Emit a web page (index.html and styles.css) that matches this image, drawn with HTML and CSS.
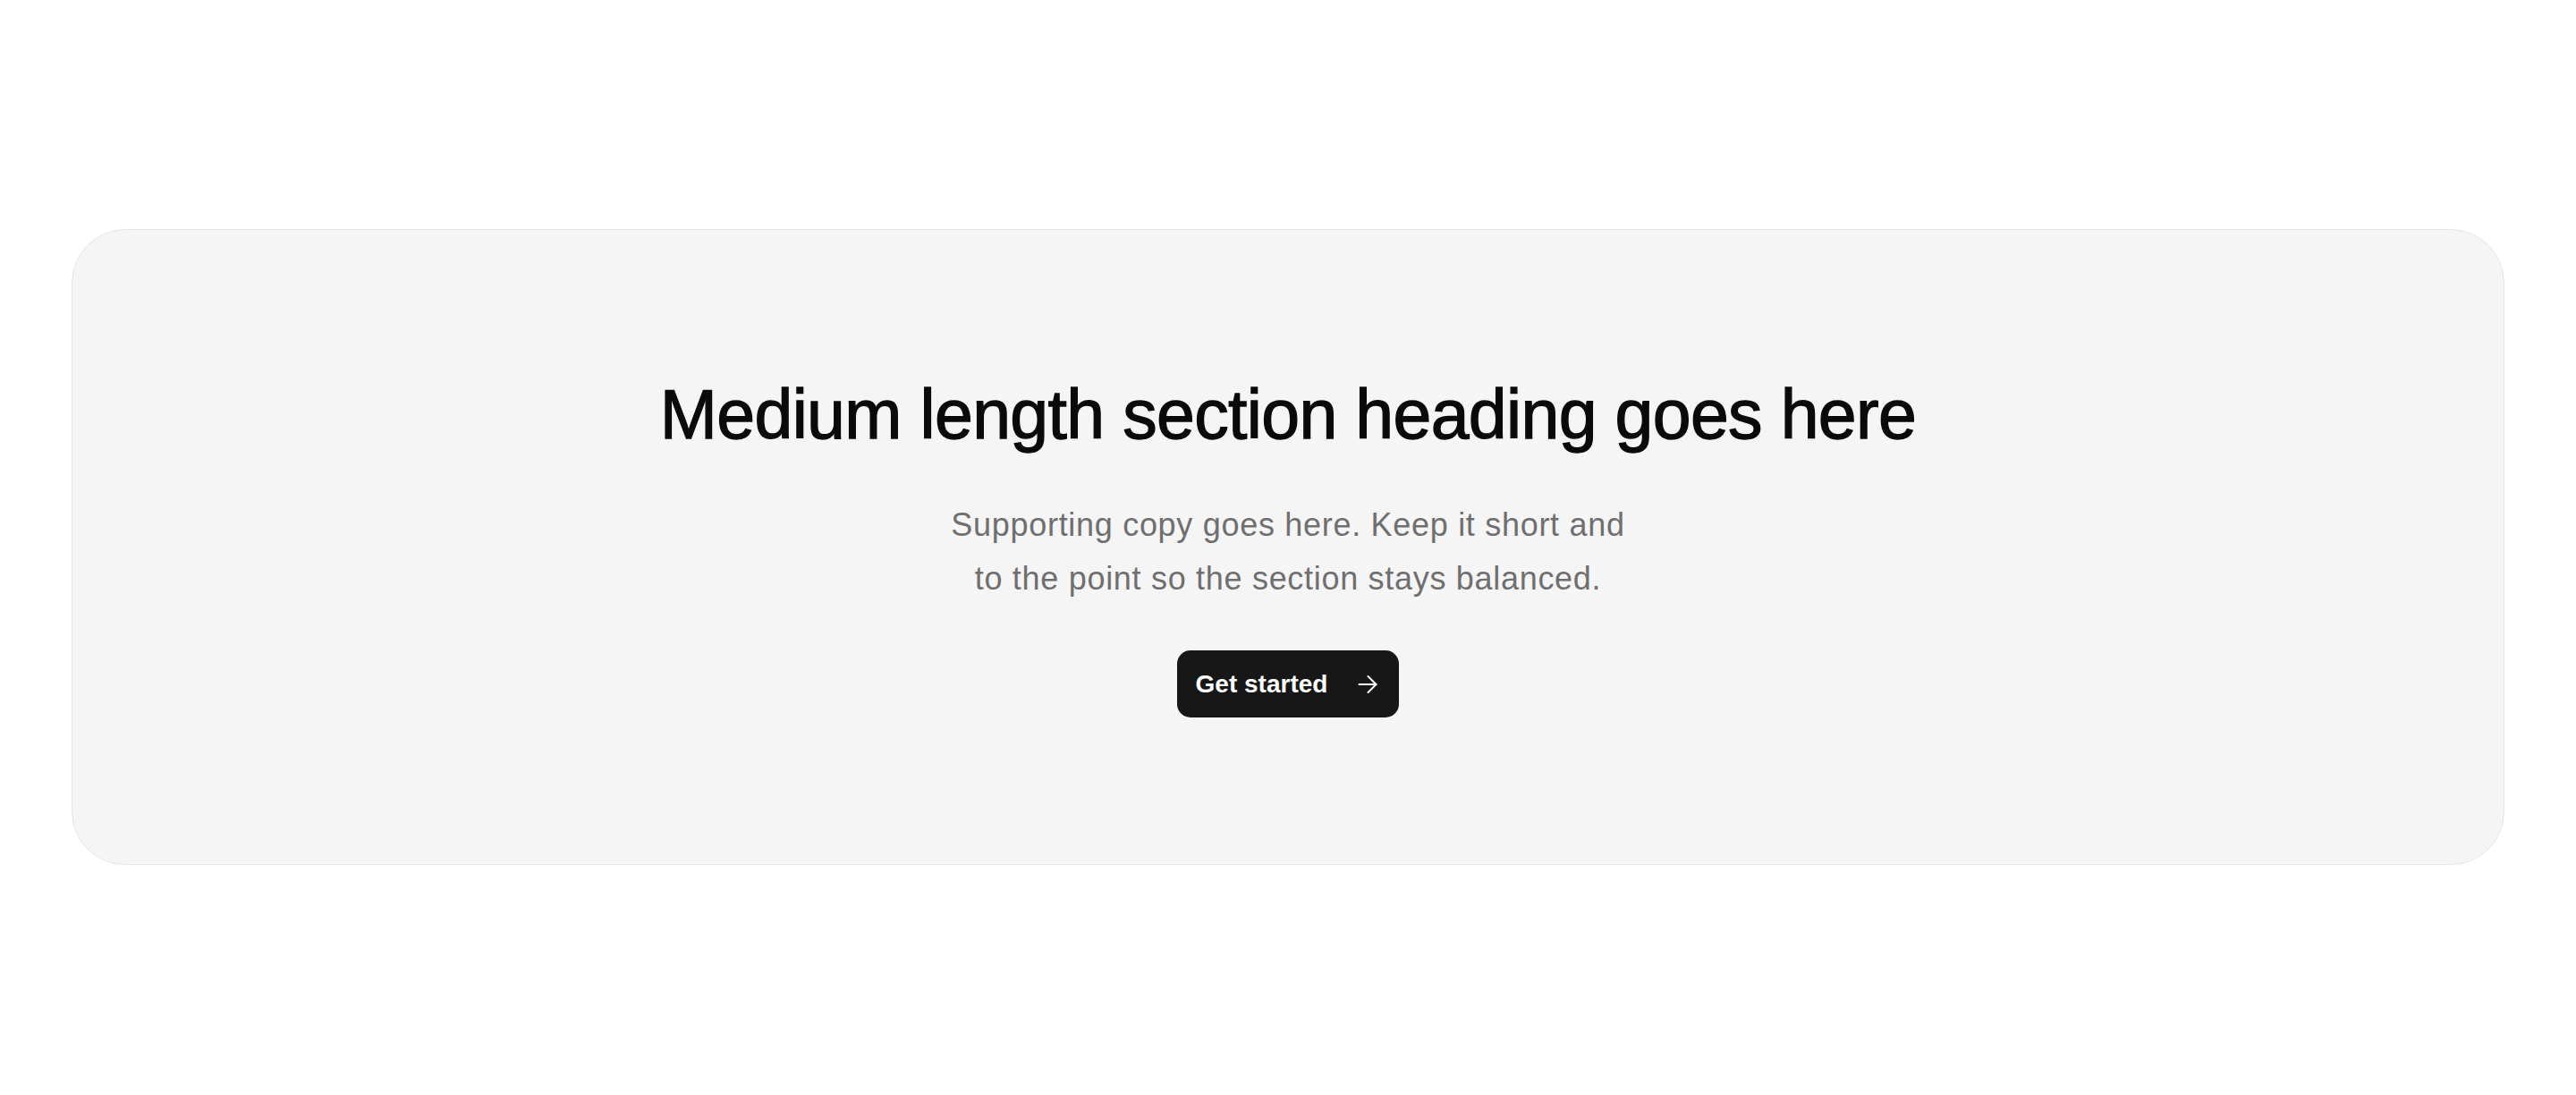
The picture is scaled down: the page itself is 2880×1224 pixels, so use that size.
FILE: index.html
```html
<!DOCTYPE html>
<html lang="en">

<head>
    <meta charset="UTF-8">
    <meta name="viewport" content="width=device-width, initial-scale=1.0">
    <title>Section</title>
    <link rel="stylesheet" href="styles.css">
</head>

<body>
    <section class="cta-section">
        <div class="cta-card">
            <h2 class="cta-title">Medium length section heading goes here</h2>
            <p class="cta-text">Supporting copy goes here. Keep it short and to the point so the section stays balanced.</p>
            <a href="#" class="cta-btn">
                <span>Get started</span>
                <svg class="cta-arrow" width="22" height="22" viewBox="0 0 22 22" fill="none" stroke="currentColor" stroke-width="2" stroke-linecap="round" stroke-linejoin="round">
                    <path d="M1.5 11h19"></path>
                    <path d="M11.5 2l9 9-9 9"></path>
                </svg>
            </a>
        </div>
    </section>
</body>

</html>
```

FILE: styles.css
```css
* {
    box-sizing: border-box;
    margin: 0;
    padding: 0;
}

body {
    font-family: "Liberation Sans", Arial, sans-serif;
    background: #fff;
    color: #0d0d0d;
}

.cta-section {
    padding: 256px 80px 257px;
}

.cta-card {
    display: flex;
    flex-direction: column;
    align-items: center;
    text-align: center;
    background-color: #f5f5f5;
    border: 1px solid #e6e6e6;
    border-radius: 60px;
    padding: 164px 40px;
}

.cta-title {
    font-size: 77px;
    font-weight: 500;
    line-height: 84px;
    letter-spacing: -0.65px;
    color: #0a0a0a;
    /* a bit heavier than regular, the design uses a medium cut */
    -webkit-text-stroke: 1.3px #0a0a0a;
}

.cta-text {
    margin-top: 52px;
    max-width: 780px;
    font-size: 36px;
    line-height: 60px;
    letter-spacing: 0.7px;
    color: #6f6f6f;
}

.cta-btn {
    margin-top: 50px;
    display: inline-flex;
    align-items: center;
    gap: 34px;
    height: 75px;
    padding: 0 24px 0 21px;
    background-color: #171717;
    color: #fff;
    border-radius: 15px;
    text-decoration: none;
    font-size: 28px;
    font-weight: 700;
}

.cta-arrow {
    display: block;
}
```
